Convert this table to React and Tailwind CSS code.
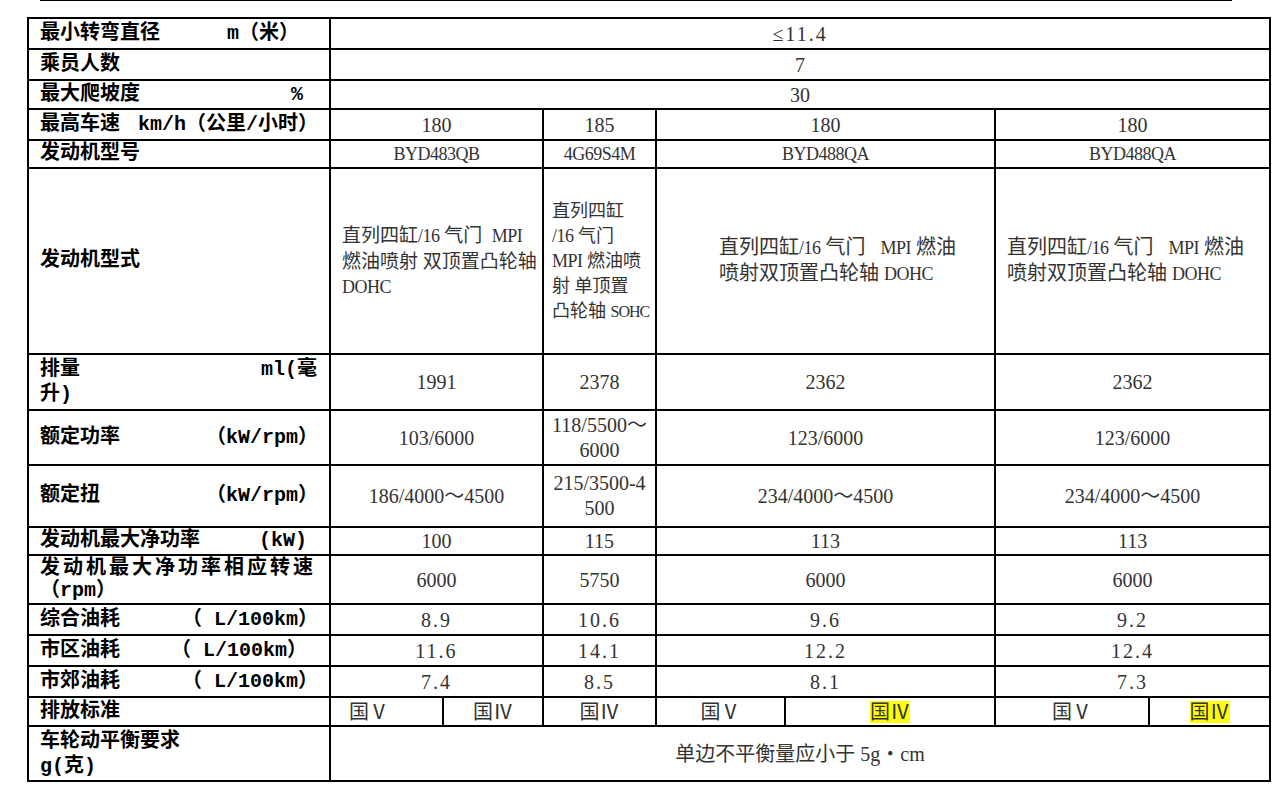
const label = "font-['Liberation_Mono','Noto_Sans_CJK_SC',monospace] font-bold text-[20px] text-black leading-[24px]";
const value = "font-['Liberation_Serif','Noto_Sans_CJK_SC',serif] text-[20px] text-[#333]";
const small = "font-['Liberation_Serif','Noto_Sans_CJK_SC',serif] text-[19px] text-[#333]";
const narrow = "font-['Liberation_Serif','Noto_Sans_CJK_SC',serif] text-[18px] text-[#333]";
const code = "font-['Liberation_Serif','Noto_Sans_CJK_SC',serif] text-[18px] tracking-[-0.5px] text-[#333]";
const dec = "font-['Liberation_Serif','Noto_Sans_CJK_SC',serif] text-[20px] tracking-[2px] text-[#333]";

const cell = "border-2 border-black align-middle";

function Label({ main, unit, pr = 'pr-3' }) {
  return (
    <td className={`${cell} pl-[11px] ${label}`}>
      <div className={`flex justify-between items-center whitespace-nowrap ${pr}`}>
        <span>{main}</span>
        {unit && <span>{unit}</span>}
      </div>
    </td>
  );
}

function V({ children, span = 1, cls = value, align = 'text-center', lead = 'leading-[24px]' }) {
  return (
    <td colSpan={span} className={`${cell} ${align} ${cls} ${lead}`}>
      {children}
    </td>
  );
}

// latin runs inside the engine description cells, kept narrow like the original
function L({ children, tight }) {
  return (
    <span className={tight ? 'text-[16px] tracking-[-1px]' : 'text-[18px] tracking-[-0.5px]'}>{children}</span>
  );
}

function Hl({ children }) {
  return <span className="bg-[#ffff00]">{children}</span>;
}

const fuelRows = [
  ['综合油耗', '（ L/100km）', 'pr-[11px]', ['8.9', '10.6', '9.6', '9.2']],
  ['市区油耗', '（ L/100km）', 'pr-[22px]', ['11.6', '14.1', '12.2', '12.4']],
  ['市郊油耗', '（ L/100km）', 'pr-[11px]', ['7.4', '8.5', '8.1', '7.3']],
];

export default function App() {
  return (
    <div className="w-[1272px] min-h-[804px] bg-white pb-[20px]">
      <div className="ml-[40px] w-[1192px] border-t border-black" />
      <table className="ml-[27px] mt-[16px] w-[1242px] table-fixed border-collapse border-2 border-black">
        <colgroup>
          <col className="w-[302px]" />
          <col className="w-[113px]" />
          <col className="w-[100px]" />
          <col className="w-[113px]" />
          <col className="w-[129px]" />
          <col className="w-[210px]" />
          <col className="w-[154px]" />
          <col className="w-[121px]" />
        </colgroup>
        <tbody>
          <tr className="h-[31px]">
            <Label main="最小转弯直径" unit="m（米）" pr="pr-[30px]" />
            <V span={7} cls={dec}>≤11.4</V>
          </tr>
          <tr className="h-[31px]">
            <Label main="乘员人数" />
            <V span={7}>7</V>
          </tr>
          <tr className="h-[29px]">
            <Label main="最大爬坡度" unit="%" pr="pr-[26px]" />
            <V span={7}>30</V>
          </tr>
          <tr className="h-[31px]">
            <Label main="最高车速" unit="km/h（公里/小时）" pr="pr-[11px]" />
            <V span={2}>180</V>
            <V>185</V>
            <V span={2}>180</V>
            <V span={2}>180</V>
          </tr>
          <tr className="h-[28px]">
            <Label main="发动机型号" />
            <V span={2} cls={code}>BYD483QB</V>
            <V cls={code}>4G69S4M</V>
            <V span={2} cls={code}>BYD488QA</V>
            <V span={2} cls={code}>BYD488QA</V>
          </tr>
          <tr className="h-[186px]">
            <Label main="发动机型式" />
            <V span={2} cls={small} align="text-left pl-[11px] pr-0 whitespace-nowrap" lead="leading-[25px]">
              直列四缸<L>/16</L> 气门&nbsp;&nbsp;<L>MPI</L><br />燃油喷射 双顶置凸轮轴<br /><L>DOHC</L>
            </V>
            <V cls={narrow} align="text-left pl-[8px] pr-0 whitespace-nowrap" lead="leading-[25px]">
              直列四缸<br /><L>/16</L> 气门<br /><L>MPI</L> 燃油喷<br />射 单顶置<br />凸轮轴 <L tight>SOHC</L>
            </V>
            <V span={2} align="text-left pl-[62px] pr-0 whitespace-nowrap" lead="leading-[25px]">
              直列四缸<L>/16</L> 气门&nbsp;&nbsp;&nbsp;<L>MPI</L> 燃油<br />喷射双顶置凸轮轴 <L>DOHC</L>
            </V>
            <V span={2} align="text-left pl-[11px] pr-0 whitespace-nowrap" lead="leading-[25px]">
              直列四缸<L>/16</L> 气门&nbsp;&nbsp;&nbsp;<L>MPI</L> 燃油<br />喷射双顶置凸轮轴 <L>DOHC</L>
            </V>
          </tr>
          <tr className="h-[56px]">
            <td className={`${cell} pl-[11px] pr-[12px] ${label} !leading-[25px]`}>
              <div className="flex justify-between">
                <span>排量</span>
                <span>ml(毫</span>
              </div>
              <div>升)</div>
            </td>
            <V span={2}>1991</V>
            <V>2378</V>
            <V span={2}>2362</V>
            <V span={2}>2362</V>
          </tr>
          <tr className="h-[55px]">
            <Label main="额定功率" unit="（kW/rpm）" pr="pr-[11px]" />
            <V span={2}>103/6000</V>
            <V lead="leading-[25px]">118/5500～<br />6000</V>
            <V span={2}>123/6000</V>
            <V span={2}>123/6000</V>
          </tr>
          <tr className="h-[62px]">
            <Label main="额定扭" unit="（kW/rpm）" pr="pr-[11px]" />
            <V span={2}>186/4000～4500</V>
            <V lead="leading-[25px]">215/3500-4<br />500</V>
            <V span={2}>234/4000～4500</V>
            <V span={2}>234/4000～4500</V>
          </tr>
          <tr className="h-[28px]">
            <Label main="发动机最大净功率" unit="(kW)" pr="pr-[22px]" />
            <V span={2}>100</V>
            <V>115</V>
            <V span={2}>113</V>
            <V span={2}>113</V>
          </tr>
          <tr className="h-[49px]">
            <td className={`${cell} pl-[11px] pr-[10px] ${label} !leading-[22px]`}>
              <div className="tracking-[3px] whitespace-nowrap">发动机最大净功率相应转速</div>
              <div>（rpm）</div>
            </td>
            <V span={2}>6000</V>
            <V>5750</V>
            <V span={2}>6000</V>
            <V span={2}>6000</V>
          </tr>
          {fuelRows.map(([main, unit, pr, vals]) => (
            <tr key={main} className="h-[31px]">
              <Label main={main} unit={unit} pr={pr} />
              <V span={2} cls={dec}>{vals[0]}</V>
              <V cls={dec}>{vals[1]}</V>
              <V span={2} cls={dec}>{vals[2]}</V>
              <V span={2} cls={dec}>{vals[3]}</V>
            </tr>
          ))}
          <tr className="h-[29px]">
            <Label main="排放标准" />
            <V align="text-left pl-[18px]">国Ⅴ</V>
            <V>国Ⅳ</V>
            <V>国Ⅳ</V>
            <V>国Ⅴ</V>
            <V><Hl>国Ⅳ</Hl></V>
            <V>国Ⅴ</V>
            <V><Hl>国Ⅳ</Hl></V>
          </tr>
          <tr className="h-[55px]">
            <td className={`${cell} pl-[11px] ${label} !leading-[25px]`}>
              <div>车轮动平衡要求</div>
              <div>g(克)</div>
            </td>
            <V span={7}>单边不平衡量应小于 5g・cm</V>
          </tr>
        </tbody>
      </table>
    </div>
  );
}
